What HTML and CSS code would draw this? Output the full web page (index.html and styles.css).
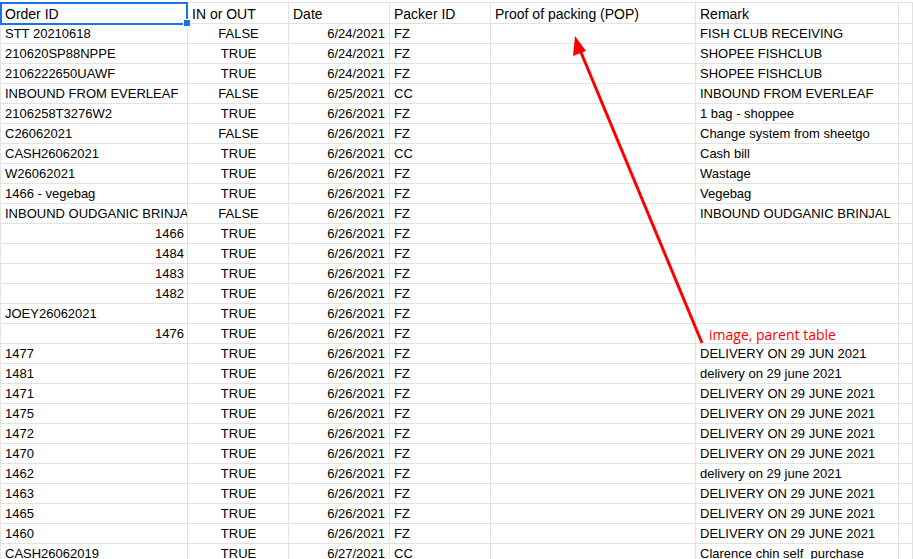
FILE: index.html
```html
<!DOCTYPE html>
<html lang="en">
<head>
  <meta charset="UTF-8" />
  <title>Packing Log</title>
  <link rel="stylesheet" href="styles.css">
</head>
<body>
  <div class="sheet">
    <div class="row head">
      <div class="cell">Order ID</div>
      <div class="cell">IN or OUT</div>
      <div class="cell">Date</div>
      <div class="cell">Packer ID</div>
      <div class="cell">Proof of packing (POP)</div>
      <div class="cell">Remark</div>
      <div class="cell"></div>
    </div>
    <div id="rows"></div>

    <!-- selected cell A1 -->
    <div class="select"><span class="handle"></span></div>

    <!-- annotation -->
    <svg class="arrow" width="913" height="559" viewBox="0 0 913 559">
      <line x1="702" y1="343" x2="580" y2="50" stroke="#ff0000" stroke-width="3"/>
      <polygon points="575,36 573,56 586,51" fill="#ff0000"/>
    </svg>
    <div class="note">image, parent table</div>
  </div>

  <script>
    const data = [
      ["STT 20210618", "FALSE", "6/24/2021", "FZ", "FISH CLUB RECEIVING"],
      ["210620SP88NPPE", "TRUE", "6/24/2021", "FZ", "SHOPEE FISHCLUB"],
      ["2106222650UAWF", "TRUE", "6/24/2021", "FZ", "SHOPEE FISHCLUB"],
      ["INBOUND FROM EVERLEAF", "FALSE", "6/25/2021", "CC", "INBOUND FROM EVERLEAF"],
      ["2106258T3276W2", "TRUE", "6/26/2021", "FZ", "1 bag - shoppee"],
      ["C26062021", "FALSE", "6/26/2021", "FZ", "Change system from sheetgo"],
      ["CASH26062021", "TRUE", "6/26/2021", "CC", "Cash bill"],
      ["W26062021", "TRUE", "6/26/2021", "FZ", "Wastage"],
      ["1466 - vegebag", "TRUE", "6/26/2021", "FZ", "Vegebag"],
      ["INBOUND OUDGANIC BRINJAL", "FALSE", "6/26/2021", "FZ", "INBOUND OUDGANIC BRINJAL"],
      [1466, "TRUE", "6/26/2021", "FZ", ""],
      [1484, "TRUE", "6/26/2021", "FZ", ""],
      [1483, "TRUE", "6/26/2021", "FZ", ""],
      [1482, "TRUE", "6/26/2021", "FZ", ""],
      ["JOEY26062021", "TRUE", "6/26/2021", "FZ", ""],
      [1476, "TRUE", "6/26/2021", "FZ", ""],
      ["1477", "TRUE", "6/26/2021", "FZ", "DELIVERY ON 29 JUN 2021"],
      ["1481", "TRUE", "6/26/2021", "FZ", "delivery on 29 june 2021"],
      ["1471", "TRUE", "6/26/2021", "FZ", "DELIVERY ON 29 JUNE 2021"],
      ["1475", "TRUE", "6/26/2021", "FZ", "DELIVERY ON 29 JUNE 2021"],
      ["1472", "TRUE", "6/26/2021", "FZ", "DELIVERY ON 29 JUNE 2021"],
      ["1470", "TRUE", "6/26/2021", "FZ", "DELIVERY ON 29 JUNE 2021"],
      ["1462", "TRUE", "6/26/2021", "FZ", "delivery on 29 june 2021"],
      ["1463", "TRUE", "6/26/2021", "FZ", "DELIVERY ON 29 JUNE 2021"],
      ["1465", "TRUE", "6/26/2021", "FZ", "DELIVERY ON 29 JUNE 2021"],
      ["1460", "TRUE", "6/26/2021", "FZ", "DELIVERY ON 29 JUNE 2021"],
      ["CASH26062019", "TRUE", "6/27/2021", "CC", "Clarence chin self  purchase"]
    ];

    const rowsEl = document.getElementById("rows");
    data.forEach(r => {
      const num = typeof r[0] === "number" ? " num" : "";
      rowsEl.insertAdjacentHTML("beforeend", `
        <div class="row">
          <div class="cell${num}">${r[0]}</div>
          <div class="cell bool">${r[1]}</div>
          <div class="cell num date">${r[2]}</div>
          <div class="cell">${r[3]}</div>
          <div class="cell"></div>
          <div class="cell">${r[4]}</div>
          <div class="cell"></div>
        </div>
      `);
    });
  </script>
</body>
</html>
```

FILE: styles.css
```css
body {
  margin: 0;
  overflow: hidden;
  background: #fff;
  font-family: "Liberation Sans", Arial, sans-serif;
  font-size: 13px;
  color: #000;
}

.sheet {
  position: relative;
  margin-top: 2px;
  border-top: 1px solid #e2e2e2;
}

.row {
  display: grid;
  grid-template-columns: 187px 101px 101px 101px 205px 203px 1fr;
  height: 20px;
  border-left: 1px solid #e2e2e2;
}

.row.head {
  height: 21px;
  font-size: 14px;
}

.cell {
  box-sizing: border-box;
  display: flex;
  align-items: flex-end;
  padding: 0 3px 1px 4px;
  line-height: 16px;
  white-space: pre;
  overflow: hidden;
  border-right: 1px solid #e2e2e2;
  border-bottom: 1px solid #e2e2e2;
}

.cell.num {
  justify-content: flex-end;
}

.cell.date {
  padding-right: 4px;
}

.cell.bool {
  justify-content: center;
}

/* selected cell */
.select {
  position: absolute;
  left: 0;
  top: -1px;
  width: 184px;
  height: 19px;
  border: 2px solid #1a73e8;
}

.handle {
  position: absolute;
  right: -5px;
  bottom: -4px;
  width: 6px;
  height: 6px;
  background: #1a73e8;
  border: 1px solid #fff;
}

.arrow {
  position: absolute;
  left: 0;
  top: -3px;
  pointer-events: none;
}

.note {
  position: absolute;
  left: 709px;
  top: 323px;
  font-family: "Open Sans", sans-serif;
  font-size: 14px;
  line-height: 18px;
  color: #ff0000;
}
```
